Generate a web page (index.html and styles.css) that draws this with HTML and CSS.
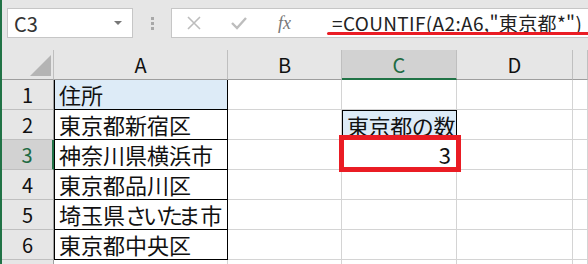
FILE: index.html
```html
<!DOCTYPE html>
<html lang="ja">
<head>
    <meta charset="UTF-8">
    <title>COUNTIF</title>
    <link rel="stylesheet" href="styles.css">
</head>
<body>
    <div class="window">
        <!-- 数式バー -->
        <div class="toolbar">
            <div class="name-box">
                <span>C3</span>
                <span class="drop"></span>
            </div>
            <div class="grip"><i></i><i></i><i></i></div>
            <div class="formula-box">
                <div class="btns">
                    <svg class="ico" width="16" height="16" viewBox="0 0 16 16"><path d="M2 2L14 14M14 2L2 14" stroke="#bdbdbd" stroke-width="1.6" fill="none"/></svg>
                    <svg class="ico" width="18" height="16" viewBox="0 0 18 16"><path d="M2 8L7 13L16 3" stroke="#bdbdbd" stroke-width="2.4" fill="none"/></svg>
                    <span class="fx">fx</span>
                </div>
                <div class="formula">=COUNTIF(A2:A6,"東京都*")<span class="underline"></span></div>
            </div>
        </div>

        <!-- シート -->
        <div class="sheet">
            <div class="hd corner"><span class="tri"></span></div>
            <div class="hd col">A</div>
            <div class="hd col">B</div>
            <div class="hd col active">C</div>
            <div class="hd col">D</div>
            <div class="hd col"></div>

            <div class="hd row">1</div>
            <div class="cell a head">住所</div>
            <div class="cell"></div><div class="cell"></div><div class="cell"></div><div class="cell"></div>

            <div class="hd row">2</div>
            <div class="cell a">東京都新宿区</div>
            <div class="cell"></div>
            <div class="cell label">東京都の数</div>
            <div class="cell"></div><div class="cell"></div>

            <div class="hd row active">3</div>
            <div class="cell a">神奈川県横浜市</div>
            <div class="cell"></div>
            <div class="cell num">3<span class="mark"></span></div>
            <div class="cell"></div><div class="cell"></div>

            <div class="hd row">4</div>
            <div class="cell a">東京都品川区</div>
            <div class="cell"></div><div class="cell"></div><div class="cell"></div><div class="cell"></div>

            <div class="hd row">5</div>
            <div class="cell a">埼玉県<span class="kana">さいたま</span>市</div>
            <div class="cell"></div><div class="cell"></div><div class="cell"></div><div class="cell"></div>

            <div class="hd row">6</div>
            <div class="cell a">東京都中央区</div>
            <div class="cell"></div><div class="cell"></div><div class="cell"></div><div class="cell"></div>

            <div class="hd row"></div>
            <div class="cell a blank"></div>
            <div class="cell"></div><div class="cell"></div><div class="cell"></div><div class="cell"></div>
        </div>
    </div>
</body>
</html>
```

FILE: styles.css
```css
/* 全体 */
body {
    margin: 0;
    font-family: "Noto Sans CJK JP", "Noto Sans", sans-serif;
    background-color: #e6e6e6;
    overflow: hidden;
}

.window {
    border-left: 2px solid #217346;
    height: 264px;
    box-sizing: border-box;
    overflow: hidden;
}

/* 数式バー */
.toolbar {
    height: 50px;
    display: flex;
    align-items: flex-start;
    padding-top: 8px;
    box-sizing: border-box;
}

.name-box {
    margin-left: 5px;
    width: 126px;
    height: 30px;
    box-sizing: border-box;
    background: #fff;
    border: 1px solid #c6c6c6;
    display: flex;
    align-items: center;
    justify-content: space-between;
    padding: 0 10px 0 6px;
    font-size: 20px;
    color: #333;
}

.drop {
    width: 0;
    height: 0;
    border-left: 4px solid transparent;
    border-right: 4px solid transparent;
    border-top: 4px solid #777;
}

.grip {
    width: 38px;
    height: 30px;
    display: flex;
    flex-direction: column;
    align-items: center;
    justify-content: center;
    gap: 2px;
}

.grip i {
    width: 3px;
    height: 3px;
    background: #a8a8a8;
}

.formula-box {
    flex: 1;
    height: 30px;
    box-sizing: border-box;
    background: #fff;
    border: 1px solid #c6c6c6;
    border-right: none;
    display: flex;
    align-items: center;
}

.btns {
    width: 154px;
    display: flex;
    align-items: center;
    gap: 28px;
    padding-left: 14px;
    box-sizing: border-box;
}

.fx {
    font-family: "Liberation Serif", serif;
    font-style: italic;
    font-size: 18px;
    color: #777;
    margin-left: 2px;
}

.formula {
    position: relative;
    font-size: 19px;
    letter-spacing: 0.35px;
    color: #222;
    white-space: nowrap;
    line-height: 28px;
    padding-left: 6px;
}

.underline {
    position: absolute;
    left: 1px;
    right: -8px;
    bottom: 2px;
    height: 3px;
    border-radius: 2px;
    background: #ea1c24;
}

/* シート */
.sheet {
    display: grid;
    grid-template-columns: 52px 174px 114px 115px 116px 1fr;
    grid-auto-rows: 30px;
}

.hd {
    background: #e6e6e6;
    box-sizing: border-box;
    display: flex;
    align-items: center;
    justify-content: center;
    font-size: 20px;
    color: #111;
}

.corner {
    border-right: 1px solid #bfbfbf;
    border-bottom: 1px solid #9e9e9e;
    position: relative;
}

.tri {
    position: absolute;
    right: 2px;
    bottom: 3px;
    width: 0;
    height: 0;
    border-left: 21px solid transparent;
    border-bottom: 21px solid #b4b4b4;
}

.col {
    border-right: 1px solid #bfbfbf;
    border-bottom: 1px solid #9e9e9e;
}

.col.active {
    background: #d2d2d2;
    color: #1e6b43;
    border-bottom: 2px solid #217346;
}

.row {
    border-right: 1px solid #9e9e9e;
    border-bottom: 1px solid #bfbfbf;
    font-size: 20px;
}

.row.active {
    background: #d2d2d2;
    color: #1e6b43;
    border-right: 2px solid #217346;
}

.cell {
    background: #fff;
    box-sizing: border-box;
    border-right: 1px solid #d4d4d4;
    border-bottom: 1px solid #d4d4d4;
    font-size: 22px;
    line-height: 29px;
    padding-left: 5px;
    white-space: nowrap;
    color: #111;
}

.cell.a {
    border-right: 1px solid #000;
    border-bottom: 1px solid #000;
    box-shadow: inset 1px 0 0 #000;
}

.cell.a.blank {
    border-right-color: #d4d4d4;
    border-bottom-color: #d4d4d4;
    box-shadow: none;
}

.cell.a.head {
    background: #ddebf7;
}

.kana {
    letter-spacing: -4px;
    margin-right: 4px;
}

.cell.label {
    background: #ddebf7;
    border: 1px solid #000;
    padding-left: 4px;
    letter-spacing: -0.4px;
    overflow: visible;
}

.cell.num {
    position: relative;
    text-align: right;
    padding-right: 5px;
}

.mark {
    position: absolute;
    left: -3px;
    top: -5px;
    right: -5px;
    bottom: -3px;
    border: 5px solid #ea1c24;
}
```
